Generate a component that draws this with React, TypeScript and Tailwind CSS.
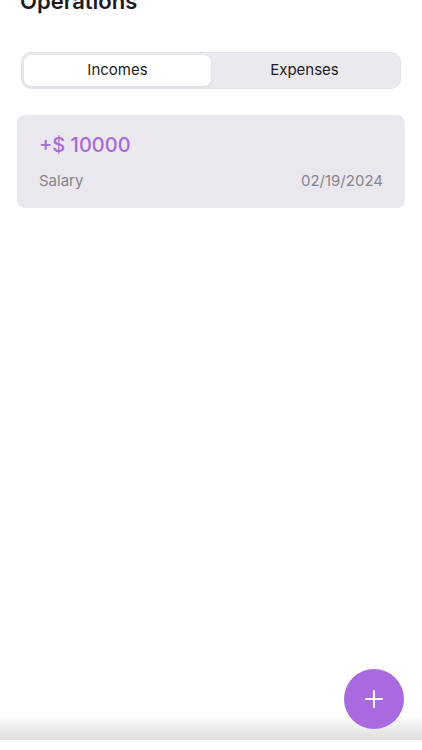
import React, { useState } from 'react';

type Operation = {
  amount: number;
  category: string;
  date: string;
};

const incomes: Operation[] = [{ amount: 10000, category: 'Salary', date: '02/19/2024' }];

export default function App() {
  const [tab, setTab] = useState<'incomes' | 'expenses'>('incomes');

  return (
    <div
      className="relative flex h-[750px] w-[422px] flex-col overflow-hidden bg-white"
      style={{ fontFamily: 'Inter, "Noto Sans", sans-serif' }}
    >
      <div className="flex-1">
        <h1 className="-mt-[12px] pl-[20px] text-[22px] font-semibold leading-[27px] text-[#1c1c1e]">Operations</h1>

        {/* segmented control */}
        <div className="mx-[22px] mt-[38px] flex h-[35px] rounded-[9px] bg-[#ebe8ef] p-[2px] ring-1 ring-[#e4e1e8]">
          <button
            onClick={() => setTab('incomes')}
            className={`flex-1 rounded-[7px] text-[15px] font-normal text-[#1c1c1e] ${
              tab === 'incomes' ? 'bg-white shadow-[0_1px_3px_rgba(0,0,0,0.08)]' : ''
            }`}
          >
            Incomes
          </button>
          <button
            onClick={() => setTab('expenses')}
            className={`flex-1 rounded-[7px] text-[15px] font-normal text-[#1c1c1e] ${
              tab === 'expenses' ? 'bg-white shadow-[0_1px_3px_rgba(0,0,0,0.08)]' : ''
            }`}
          >
            Expenses
          </button>
        </div>

        {tab === 'incomes' &&
          incomes.map((op) => (
            <div
              key={op.date + op.category}
              className="mx-[17px] mt-[27px] flex h-[93px] flex-col rounded-[8px] bg-[#ebe7ef] px-[22px] pt-[18px]"
            >
              <div className="text-[20px] font-medium leading-[24px] text-[#a76bd6]">+$ {op.amount}</div>
              <div className="mt-[15px] flex items-center justify-between text-[15px] leading-[18px] text-[#87858b]">
                <span>{op.category}</span>
                <span>{op.date}</span>
              </div>
            </div>
          ))}
      </div>

      {/* bottom bar shadow */}
      <div className="h-[25px] bg-gradient-to-b from-white to-[#dedede]" />
      <div className="h-[10px] bg-white" />

      <button className="absolute left-[344px] top-[669px] flex h-[60px] w-[60px] items-center justify-center rounded-full bg-[#a86ade]">
        <svg width="20" height="20" viewBox="0 0 20 20" fill="none" stroke="white" strokeWidth="2" strokeLinecap="round">
          <path d="M10 2v16M2 10h16" />
        </svg>
      </button>
    </div>
  );
}
